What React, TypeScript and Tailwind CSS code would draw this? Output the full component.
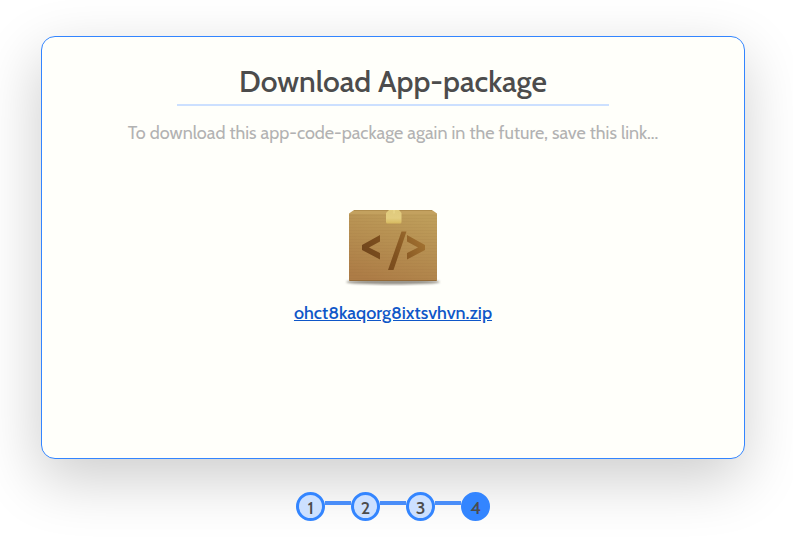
const steps = [1, 2, 3, 4];
const currentStep = 4;

function PackageIcon() {
  return (
    <svg viewBox="0 0 100 80" className="h-20 w-[100px]" aria-hidden="true">
      <defs>
        <linearGradient id="box" x1="0.3" y1="1" x2="0.7" y2="0">
          <stop offset="0" stopColor="#ad7c46" />
          <stop offset="0.5" stopColor="#b58d50" />
          <stop offset="1" stopColor="#be9d5a" />
        </linearGradient>
        <linearGradient id="mark" gradientUnits="userSpaceOnUse" x1="22" y1="60" x2="76" y2="30">
          <stop offset="0" stopColor="#6e431b" />
          <stop offset="0.5" stopColor="#80511f" />
          <stop offset="1" stopColor="#a07030" />
        </linearGradient>
        <linearGradient id="tape" x1="0" y1="0" x2="0" y2="1">
          <stop offset="0" stopColor="#e0ca7c" />
          <stop offset="0.6" stopColor="#e3cd80" />
          <stop offset="1" stopColor="#d6b95e" />
        </linearGradient>
        <pattern id="grain" width="4" height="3" patternUnits="userSpaceOnUse">
          <path d="M0 .5H4" stroke="#8d642f" strokeOpacity=".08" strokeWidth="1" />
        </pattern>
        <filter id="soft" x="-10%" y="-100%" width="120%" height="300%">
          <feGaussianBlur stdDeviation="1" />
        </filter>
      </defs>
      <ellipse cx="50" cy="76" rx="47" ry="2.5" fill="#5d564c" opacity=".65" filter="url(#soft)" />
      <path d="M11 4H89L94 7.500V9H6V7.500Z" fill="#c3a15f" />
      <path d="M6 8.500Q6 8 7 8H93Q94 8 94 8.500V74Q94 75 93 75H7Q6 75 6 74Z" fill="url(#box)" />
      <path d="M6 9H94V75H6Z" fill="url(#grain)" />
      <path d="M11 4.500H89" stroke="#b18e4e" strokeWidth="1" />
      <path d="M6.500 74.500H93.500" stroke="#936a37" strokeWidth="1" />
      <path d="M46 4H56L58.500 7V16Q58.500 17.500 57 17.500H44.500Q43 17.500 43 16V7Z" fill="url(#tape)" />
      <path d="M51 4V7.500" stroke="#eddb91" strokeWidth="1" />
      <g fill="url(#mark)">
        <path d="M37 29V35.500L26 41.500L37 47V53.500L19 44V39Z" />
        <path d="M58.500 25.500H63.500L50.500 64H45Z" />
        <path d="M64 29L82 39V44L64 53.500V47L75 41.500L64 35.500Z" />
      </g>
    </svg>
  );
}

export default function App() {
  return (
    <div className="min-h-screen overflow-hidden bg-white pt-9 pr-12 pb-9 pl-[41px] font-['Cabin',Lato,sans-serif] text-[#4c4c4c]">
      <main className="flex min-h-[423px] flex-col items-center rounded-[14px] border border-[#3385ff] bg-[#fffffa] px-6 pt-6 shadow-[-2px_20px_60px_rgba(0,0,0,0.2)]">
        <h1 className="w-full max-w-[432px] border-b-2 border-[#cce0ff] pt-px pb-[3px] text-center text-[30px] leading-[39px] font-medium">
          Download App-package
        </h1>
        <p className="mt-[15px] text-center text-[18px] leading-6 text-[#b2b2b2]">
          To download this app-code-package again in the future, save this link...
        </p>
        <a
          href="#download"
          className="mt-[61px] flex flex-col items-center gap-[15px] text-[18px] leading-6 font-medium text-[#0f57c8] underline"
        >
          <PackageIcon />
          <span>ohct8kaqorg8ixtsvhvn.zip</span>
        </a>
      </main>

      <ol className="mt-[33px] flex justify-center">
        {steps.map((step) => (
          <li key={step} className="flex" aria-current={step === currentStep ? "step" : undefined}>
            {step > 1 && <span className="mt-[9px] h-1 w-[26px] bg-[#4a8df8]" />}
            <span
              className={`flex size-[29px] items-center justify-center rounded-full border-3 border-[#3385ff] pt-[2px] text-[18px] leading-6 font-medium ${
                step === currentStep ? "bg-[#3385ff]" : "bg-[#cce0ff]"
              }`}
            >
              {step}
            </span>
          </li>
        ))}
      </ol>
    </div>
  );
}
